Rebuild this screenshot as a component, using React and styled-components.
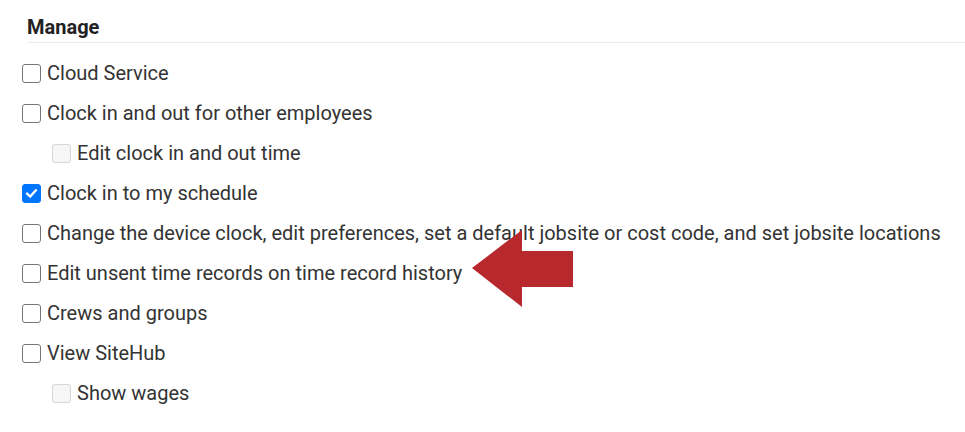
import React from 'react'
import styled, { createGlobalStyle } from 'styled-components'

const Global = createGlobalStyle`
  body {
    margin: 0;
    background: #fff;
    font-family: Roboto, "Liberation Sans", sans-serif;
    color: #333;
  }
`

const items = [
  { label: 'Cloud Service' },
  { label: 'Clock in and out for other employees' },
  { label: 'Edit clock in and out time', nested: true, disabled: true },
  { label: 'Clock in to my schedule', checked: true },
  {
    label:
      'Change the device clock, edit preferences, set a default jobsite or cost code, and set jobsite locations',
  },
  { label: 'Edit unsent time records on time record history' },
  { label: 'Crews and groups' },
  { label: 'View SiteHub' },
  { label: 'Show wages', nested: true, disabled: true },
]

const App = () => (
  <Page>
    <Global />
    <Heading>Manage</Heading>
    <List>
      {items.map(item => (
        <Row key={item.label} $nested={item.nested}>
          <Box $checked={item.checked} $disabled={item.disabled}>
            {item.checked && (
              <svg width="13" height="13" viewBox="0 0 13 13">
                <path
                  d="M2.2 6.8 L5.2 9.6 L10.8 3.4"
                  fill="none"
                  stroke="#fff"
                  strokeWidth="2.4"
                  strokeLinecap="square"
                />
              </svg>
            )}
          </Box>
          <Label>{item.label}</Label>
        </Row>
      ))}
    </List>
    <Arrow width="102" height="78" viewBox="0 0 102 78">
      <path d="M0 38 L50 0 L50 21 L101 21 L101 57 L50 57 L50 77 Z" fill="#b8292d" />
    </Arrow>
  </Page>
)

const Page = styled.div`
  position: relative;
  width: 965px;
  height: 432px;
  overflow: hidden;
`

const Heading = styled.h2`
  margin: 0 0 0 27px;
  padding-top: 16px;
  padding-bottom: 4px;
  font-size: 20px;
  font-weight: 700;
  line-height: 22px;
  color: #222;
  border-bottom: 1px solid #ebebeb;
`

const List = styled.div`
  display: flex;
  flex-direction: column;
  gap: 18px;
  padding-top: 19px;
`

const Row = styled.label`
  display: flex;
  align-items: center;
  gap: 6px;
  padding-left: ${p => (p.$nested ? 52 : 22)}px;
  height: 22px;
`

const Box = styled.span`
  box-sizing: border-box;
  width: 19px;
  height: 19px;
  border-radius: 3px;
  display: flex;
  align-items: center;
  justify-content: center;
  flex-shrink: 0;
  border: 1px solid
    ${p => (p.$checked ? '#0075ff' : p.$disabled ? '#d6d6d6' : '#767676')};
  background: ${p => (p.$checked ? '#0075ff' : p.$disabled ? '#f6f6f6' : '#fff')};
`

const Label = styled.span`
  font-size: 20px;
  line-height: 22px;
  color: #333;
  white-space: nowrap;
`

const Arrow = styled.svg`
  position: absolute;
  left: 472px;
  top: 230px;
`

export default App
